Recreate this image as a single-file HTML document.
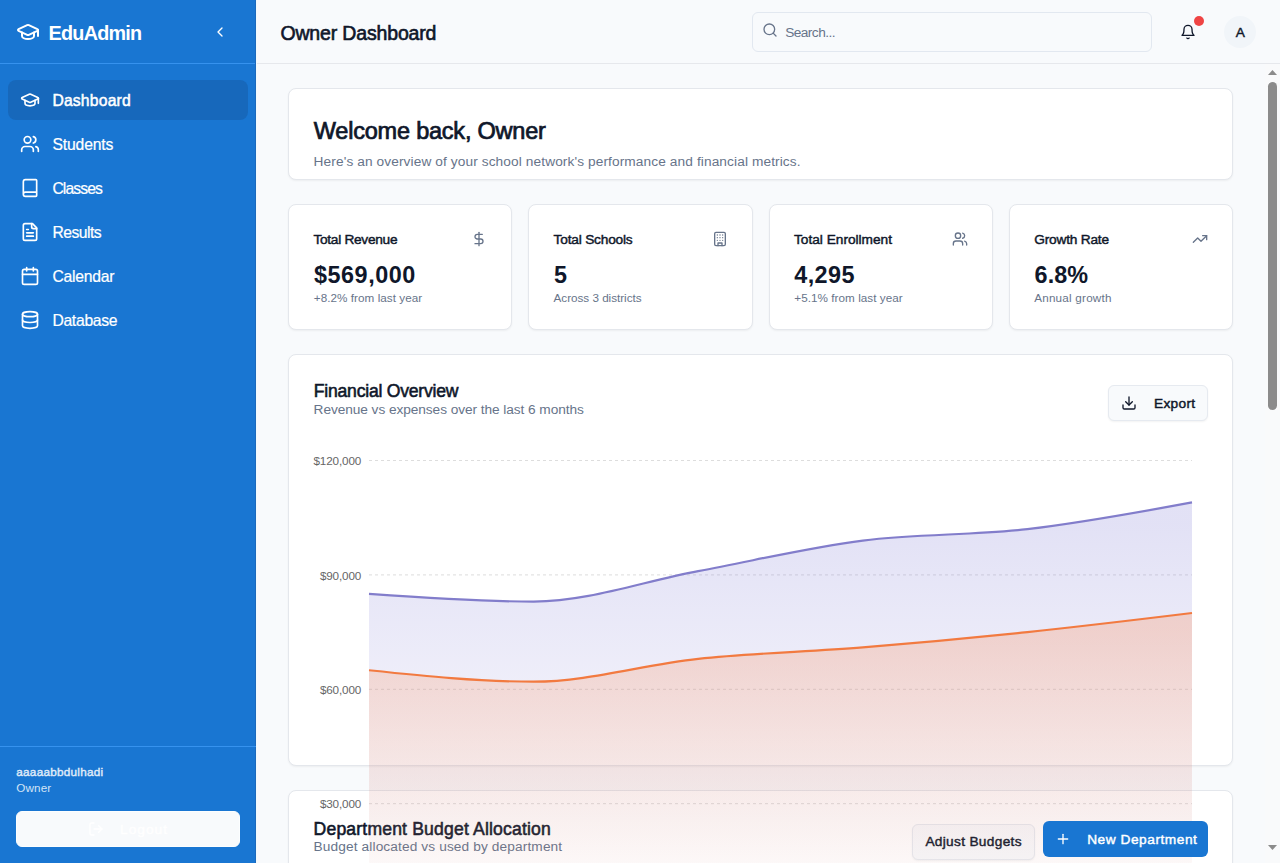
<!DOCTYPE html>
<html lang="en">
<head>
<meta charset="utf-8">
<title>Owner Dashboard</title>
<style>
*{box-sizing:border-box;margin:0;padding:0}
html,body{width:1280px;height:863px;overflow:hidden;background:#f8fafc;font-family:"Liberation Sans",sans-serif;color:#0f172a}
body{position:relative}
svg{display:block}
.ic{fill:none;stroke:currentColor;stroke-linecap:round;stroke-linejoin:round}
.abs{position:absolute}
.t{position:absolute;white-space:nowrap;line-height:1}
#side{position:absolute;left:0;top:0;width:256px;height:863px;background:#1976d2;color:#fff}
.hr{position:absolute;left:0;width:256px;height:1px;background:#3692ee}
.card{position:absolute;background:#fff;border:1px solid #e4e7ec;border-radius:8px;box-shadow:0 1px 2px rgba(0,0,0,.05)}
.btn{position:absolute;border:1px solid #e6eaf0;border-radius:6px;background:#f8fafc;box-shadow:0 1px 2px rgba(0,0,0,.05)}
</style>
</head>
<body>
<!-- header bar -->
<div class="abs" style="left:256px;top:63px;width:1024px;height:1px;background:#e6e8ec"></div>
<div class="abs" style="left:752px;top:12px;width:400px;height:40px;border:1px solid #e2e8f0;border-radius:6px;background:#f8fafc"></div>
<svg class="ic abs" style="left:762px;top:22px;width:16px;height:16px;color:#67748a" stroke-width="2" viewBox="0 0 24 24"><circle cx="11" cy="11" r="8"/><path d="m21 21-4.300-4.300"/></svg><div class="t" id="h1" style="left:280.40px;top:24.00px;font-size:19.50px;color:#0f172a;-webkit-text-stroke:0.62px #0f172a;letter-spacing:-0.155px;">Owner Dashboard</div>
<div class="t" id="srch" style="left:785.20px;top:26.00px;font-size:13.70px;color:#67748a;letter-spacing:-0.562px;">Search...</div><svg class="ic abs" style="left:1180px;top:24px;width:16px;height:16px;color:#0f172a" stroke-width="2" viewBox="0 0 24 24"><path d="M6 8a6 6 0 0 1 12 0c0 7 3 9 3 9H3s3-2 3-9"/><path d="M10.300 21a1.940 1.940 0 0 0 3.400 0"/></svg>
<div class="abs" style="left:1194px;top:16px;width:10px;height:10px;border-radius:50%;background:#ef4444"></div>
<div class="abs" style="left:1224px;top:16px;width:32px;height:32px;border-radius:50%;background:#f1f5f9"></div>
<div class="t" id="av" style="left:1235.80px;top:26.00px;font-size:13.70px;color:#0f172a;-webkit-text-stroke:0.43px #0f172a;">A</div>
<!-- cards -->
<div class="card" style="left:288px;top:88px;width:945px;height:92px"></div>
<div class="t" id="w1" style="left:313.80px;top:120.00px;font-size:23.50px;color:#0f172a;-webkit-text-stroke:0.74px #0f172a;letter-spacing:-0.214px;">Welcome back, Owner</div>
<div class="t" id="w2" style="left:313.60px;top:155.00px;font-size:13.70px;color:#67748a;letter-spacing:0.101px;">Here&#39;s an overview of your school network&#39;s performance and financial metrics.</div>
<div class="card" style="left:288px;top:204px;width:224.25px;height:126px"></div>
<div class="card" style="left:528.25px;top:204px;width:224.25px;height:126px"></div>
<div class="card" style="left:768.5px;top:204px;width:224.25px;height:126px"></div>
<div class="card" style="left:1008.75px;top:204px;width:224.25px;height:126px"></div>
<div class="t" id="s1" style="left:313.40px;top:233.00px;font-size:13.70px;color:#0f172a;-webkit-text-stroke:0.45px #0f172a;letter-spacing:-0.281px;">Total Revenue</div>
<div class="t" id="s2" style="left:553.60px;top:233.00px;font-size:13.70px;color:#0f172a;-webkit-text-stroke:0.45px #0f172a;letter-spacing:-0.194px;">Total Schools</div>
<div class="t" id="s3" style="left:794.00px;top:233.00px;font-size:13.70px;color:#0f172a;-webkit-text-stroke:0.45px #0f172a;letter-spacing:-0.009px;">Total Enrollment</div>
<div class="t" id="s4" style="left:1034.30px;top:233.00px;font-size:13.70px;color:#0f172a;-webkit-text-stroke:0.45px #0f172a;letter-spacing:-0.214px;">Growth Rate</div>
<div class="t" id="v1" style="left:314.00px;top:264.00px;font-size:23.40px;color:#0f172a;font-weight:bold;letter-spacing:0.525px;">$569,000</div>
<div class="t" id="v2" style="left:554.00px;top:264.00px;font-size:23.40px;color:#0f172a;font-weight:bold;">5</div>
<div class="t" id="v3" style="left:794.30px;top:264.00px;font-size:23.40px;color:#0f172a;font-weight:bold;letter-spacing:0.390px;">4,295</div>
<div class="t" id="v4" style="left:1034.60px;top:264.00px;font-size:23.40px;color:#0f172a;font-weight:bold;letter-spacing:0.078px;">6.8%</div>
<div class="t" id="b1" style="left:313.80px;top:292.00px;font-size:11.70px;color:#67748a;letter-spacing:0.045px;">+8.2% from last year</div>
<div class="t" id="b2" style="left:553.60px;top:292.00px;font-size:11.70px;color:#67748a;letter-spacing:-0.019px;">Across 3 districts</div>
<div class="t" id="b3" style="left:794.30px;top:292.00px;font-size:11.70px;color:#67748a;letter-spacing:0.045px;">+5.1% from last year</div>
<div class="t" id="b4" style="left:1034.20px;top:292.00px;font-size:11.70px;color:#67748a;letter-spacing:0.213px;">Annual growth</div><svg class="ic abs" style="left:471px;top:231px;width:16px;height:16px;color:#67748a" stroke-width="2" viewBox="0 0 24 24"><line x1="12" x2="12" y1="2" y2="22"/><path d="M17 5H9.500a3.500 3.500 0 0 0 0 7h5a3.500 3.500 0 0 1 0 7H6"/></svg><svg class="ic abs" style="left:711.5px;top:231px;width:16px;height:16px;color:#67748a" stroke-width="2" viewBox="0 0 24 24"><rect width="16" height="20" x="4" y="2" rx="2" ry="2"/><path d="M9 22v-4h6v4"/><path d="M8 6h.01"/><path d="M16 6h.01"/><path d="M12 6h.01"/><path d="M12 10h.01"/><path d="M12 14h.01"/><path d="M16 10h.01"/><path d="M16 14h.01"/><path d="M8 10h.01"/><path d="M8 14h.01"/></svg><svg class="ic abs" style="left:951.5px;top:231px;width:16px;height:16px;color:#67748a" stroke-width="2" viewBox="0 0 24 24"><path d="M16 21v-2a4 4 0 0 0-4-4H6a4 4 0 0 0-4 4v2"/><circle cx="9" cy="7" r="4"/><path d="M22 21v-2a4 4 0 0 0-3-3.870"/><path d="M16 3.130a4 4 0 0 1 0 7.750"/></svg><svg class="ic abs" style="left:1192px;top:231px;width:16px;height:16px;color:#67748a" stroke-width="2" viewBox="0 0 24 24"><polyline points="22 7 13.5 15.5 8.500 10.500 2 17"/><polyline points="16 7 22 7 22 13"/></svg>
<div class="card" style="left:288px;top:354px;width:945px;height:412px"></div>
<div class="card" style="left:288px;top:790px;width:945px;height:200px"></div>
<div class="btn" style="left:1108px;top:385px;width:100px;height:36px"></div>
<svg class="ic abs" style="left:1121px;top:395px;width:16px;height:16px;color:#0f172a" stroke-width="2" viewBox="0 0 24 24"><path d="M21 15v4a2 2 0 0 1-2 2H5a2 2 0 0 1-2-2v-4"/><polyline points="7 10 12 15 17 10"/><line x1="12" x2="12" y1="15" y2="3"/></svg>
<div class="btn" style="left:912px;top:824px;width:123px;height:36px"></div>
<div class="t" id="f1" style="left:313.80px;top:383.00px;font-size:17.60px;color:#0f172a;-webkit-text-stroke:0.56px #0f172a;letter-spacing:-0.230px;">Financial Overview</div>
<div class="t" id="f2" style="left:313.60px;top:403.00px;font-size:13.70px;color:#67748a;letter-spacing:-0.071px;">Revenue vs expenses over the last 6 months</div>
<div class="t" id="exp" style="left:1154.00px;top:397.00px;font-size:13.70px;color:#0f172a;-webkit-text-stroke:0.45px #0f172a;letter-spacing:0.316px;">Export</div>
<div class="t" id="d1" style="left:313.60px;top:821.00px;font-size:17.60px;color:#0f172a;-webkit-text-stroke:0.56px #0f172a;letter-spacing:0.164px;">Department Budget Allocation</div>
<div class="t" id="d2" style="left:313.60px;top:840.00px;font-size:13.70px;color:#67748a;letter-spacing:0.116px;">Budget allocated vs used by department</div>
<div class="t" id="adj" style="left:925.40px;top:835.00px;font-size:13.70px;color:#0f172a;-webkit-text-stroke:0.45px #0f172a;letter-spacing:0.313px;">Adjust Budgets</div>
<div class="t" id="y1" style="left:313.40px;top:455.00px;font-size:11.70px;color:#666;letter-spacing:-0.127px;">$120,000</div>
<div class="t" id="y2" style="left:319.90px;top:570.00px;font-size:11.70px;color:#666;letter-spacing:-0.146px;">$90,000</div>
<div class="t" id="y3" style="left:319.90px;top:684.00px;font-size:11.70px;color:#666;letter-spacing:-0.146px;">$60,000</div>
<div class="t" id="y4" style="left:319.90px;top:798.00px;font-size:11.70px;color:#666;letter-spacing:-0.146px;">$30,000</div>
<svg class="abs" style="left:0;top:0;width:1280px;height:863px" viewBox="0 0 1280 863">
<defs>
<linearGradient id="gR" gradientUnits="userSpaceOnUse" x1="0" y1="503" x2="0" y2="918.1"><stop offset="5%" stop-color="#8884d8" stop-opacity="0.8"/><stop offset="95%" stop-color="#8884d8" stop-opacity="0"/></linearGradient>
<linearGradient id="gE" gradientUnits="userSpaceOnUse" x1="0" y1="613" x2="0" y2="918.1"><stop offset="5%" stop-color="#ff8042" stop-opacity="0.8"/><stop offset="95%" stop-color="#ff8042" stop-opacity="0"/></linearGradient>
</defs>
<g stroke="#ccc" stroke-dasharray="3 3" stroke-width="1" opacity="0.65"><line x1="369" x2="1192" y1="460.5" y2="460.5"/><line x1="369" x2="1192" y1="574.9" y2="574.9"/><line x1="369" x2="1192" y1="689.3" y2="689.3"/><line x1="369" x2="1192" y1="803.7" y2="803.7"/></g>
<path d="M369.00,593.97C423.87,597.78,478.73,601.59,533.60,601.59C588.47,601.59,643.33,581.26,698.20,571.09C753.07,560.92,807.93,547.57,862.80,540.58C917.67,533.59,972.53,535.50,1027.40,529.14C1082.27,522.78,1137.13,512.62,1192.00,502.45L1192,918.1L369,918.1Z" fill="url(#gR)" fill-opacity="0.3"/>
<path d="M369.00,593.97C423.87,597.78,478.73,601.59,533.60,601.59C588.47,601.59,643.33,581.26,698.20,571.09C753.07,560.92,807.93,547.57,862.80,540.58C917.67,533.59,972.53,535.50,1027.40,529.14C1082.27,522.78,1137.13,512.62,1192.00,502.45" fill="none" stroke="#827dcb" stroke-width="2.2"/>
<path d="M369.00,670.23C423.87,675.95,478.73,681.67,533.60,681.67C588.47,681.67,643.33,664.51,698.20,658.79C753.07,653.07,807.93,651.80,862.80,647.35C917.67,642.90,972.53,637.82,1027.40,632.10C1082.27,626.38,1137.13,619.71,1192.00,613.03L1192,918.1L369,918.1Z" fill="url(#gE)" fill-opacity="0.3"/>
<path d="M369.00,670.23C423.87,675.95,478.73,681.67,533.60,681.67C588.47,681.67,643.33,664.51,698.20,658.79C753.07,653.07,807.93,651.80,862.80,647.35C917.67,642.90,972.53,637.82,1027.40,632.10C1082.27,626.38,1137.13,619.71,1192.00,613.03" fill="none" stroke="#f27a40" stroke-width="2.2"/>
</svg>
<div class="abs" style="left:1043px;top:821px;width:165px;height:36px;border-radius:6px;background:#1976d2"></div>
<svg class="ic abs" style="left:1055px;top:831px;width:16px;height:16px;color:#fff" stroke-width="2" viewBox="0 0 24 24"><path d="M5 12h14"/><path d="M12 5v14"/></svg><div class="t" id="newd" style="left:1087.20px;top:833.00px;font-size:13.70px;color:#fff;-webkit-text-stroke:0.43px #fff;letter-spacing:0.541px;">New Department</div>
<!-- scrollbar -->
<div class="abs" style="left:1265px;top:64px;width:15px;height:799px;background:#f9fafb"></div>
<div class="abs" style="left:1268px;top:82px;width:9px;height:328px;border-radius:5px;background:#8b8b8b"></div>
<svg class="abs" style="left:1265px;top:64px;width:15px;height:16px" viewBox="0 0 15 16"><path d="M3 11L7.500 6L12 11Z" fill="#8b8b8b"/></svg>
<svg class="abs" style="left:1265px;top:840px;width:15px;height:16px" viewBox="0 0 15 16"><path d="M3 5L7.500 10L12 5Z" fill="#8b8b8b"/></svg>
<!-- sidebar -->
<div class="abs" style="left:256px;top:0;width:1px;height:863px;background:#f1fbff"></div>
<div id="side">
<svg class="ic abs" style="left:16px;top:20px;width:24px;height:24px" stroke-width="2" viewBox="0 0 24 24"><path d="M21.42 10.922a1 1 0 0 0-.019-1.838L12.83 5.18a2 2 0 0 0-1.66 0L2.6 9.08a1 1 0 0 0 0 1.832l8.57 3.908a2 2 0 0 0 1.66 0z"/><path d="M22 10v6"/><path d="M6 12.500V16a6 3 0 0 0 12 0v-3.500"/></svg><svg class="ic abs" style="left:212px;top:24px;width:16px;height:16px" stroke-width="2" viewBox="0 0 24 24"><path d="m15 18-6-6 6-6"/></svg>
<div class="hr" style="top:63px"></div>
<div class="abs" style="left:255px;top:0;width:1px;height:863px;background:#1c69bc"></div>
<div class="abs" style="left:8px;top:80px;width:240px;height:40px;border-radius:8px;background:#1768bb"></div>
<svg class="ic abs" style="left:20px;top:90px;width:20px;height:20px" stroke-width="2" viewBox="0 0 24 24"><path d="M21.42 10.922a1 1 0 0 0-.019-1.838L12.83 5.18a2 2 0 0 0-1.66 0L2.6 9.08a1 1 0 0 0 0 1.832l8.57 3.908a2 2 0 0 0 1.66 0z"/><path d="M22 10v6"/><path d="M6 12.500V16a6 3 0 0 0 12 0v-3.500"/></svg><svg class="ic abs" style="left:20px;top:134px;width:20px;height:20px" stroke-width="2" viewBox="0 0 24 24"><path d="M16 21v-2a4 4 0 0 0-4-4H6a4 4 0 0 0-4 4v2"/><circle cx="9" cy="7" r="4"/><path d="M22 21v-2a4 4 0 0 0-3-3.870"/><path d="M16 3.130a4 4 0 0 1 0 7.750"/></svg><svg class="ic abs" style="left:20px;top:178px;width:20px;height:20px" stroke-width="2" viewBox="0 0 24 24"><path d="M4 19.500v-15A2.500 2.500 0 0 1 6.500 2H19a1 1 0 0 1 1 1v18a1 1 0 0 1-1 1H6.500a1 1 0 0 1 0-5H20"/></svg><svg class="ic abs" style="left:20px;top:222px;width:20px;height:20px" stroke-width="2" viewBox="0 0 24 24"><path d="M15 2H6a2 2 0 0 0-2 2v16a2 2 0 0 0 2 2h12a2 2 0 0 0 2-2V7Z"/><path d="M14 2v4a2 2 0 0 0 2 2h4"/><path d="M10 9H8"/><path d="M16 13H8"/><path d="M16 17H8"/></svg><svg class="ic abs" style="left:20px;top:266px;width:20px;height:20px" stroke-width="2" viewBox="0 0 24 24"><path d="M8 2v4"/><path d="M16 2v4"/><rect width="18" height="18" x="3" y="4" rx="2"/><path d="M3 10h18"/></svg><svg class="ic abs" style="left:20px;top:310px;width:20px;height:20px" stroke-width="2" viewBox="0 0 24 24"><ellipse cx="12" cy="5" rx="9" ry="3"/><path d="M3 5V19A9 3 0 0 0 21 19V5"/><path d="M3 12A9 3 0 0 0 21 12"/></svg><div class="t" id="logo" style="left:48.60px;top:24.00px;font-size:19.80px;color:#fff;font-weight:bold;letter-spacing:-0.761px;">EduAdmin</div>
<div class="t" id="n1" style="left:52.40px;top:93.00px;font-size:15.70px;color:#fff;-webkit-text-stroke:0.50px #fff;letter-spacing:0.194px;">Dashboard</div>
<div class="t" id="n2" style="left:52.40px;top:137.00px;font-size:15.70px;color:#fff;-webkit-text-stroke:0.22px #fff;letter-spacing:-0.125px;">Students</div>
<div class="t" id="n3" style="left:52.40px;top:181.00px;font-size:15.70px;color:#fff;-webkit-text-stroke:0.22px #fff;letter-spacing:-0.892px;">Classes</div>
<div class="t" id="n4" style="left:52.40px;top:225.00px;font-size:15.70px;color:#fff;-webkit-text-stroke:0.22px #fff;letter-spacing:-0.510px;">Results</div>
<div class="t" id="n5" style="left:52.40px;top:269.00px;font-size:15.70px;color:#fff;-webkit-text-stroke:0.22px #fff;letter-spacing:-0.223px;">Calendar</div>
<div class="t" id="n6" style="left:52.40px;top:313.00px;font-size:15.70px;color:#fff;-webkit-text-stroke:0.22px #fff;letter-spacing:-0.287px;">Database</div>
<div class="hr" style="top:746px"></div>
<div class="t" id="u1" style="left:16.30px;top:766.00px;font-size:11.70px;color:#e1edf9;-webkit-text-stroke:0.37px #e1edf9;letter-spacing:0.281px;">aaaaabbdulhadi</div>
<div class="t" id="u2" style="left:16.30px;top:782.00px;font-size:11.70px;color:#d3e4f6;letter-spacing:0.125px;">Owner</div>
<div class="abs" style="left:16px;top:811px;width:224px;height:36px;border-radius:6px;background:#f8fafc;border:1px solid #fcfeff"></div>
<svg class="ic abs" style="left:88px;top:821px;width:16px;height:16px;color:#fff" stroke-width="2" viewBox="0 0 24 24"><path d="M9 21H5a2 2 0 0 1-2-2V5a2 2 0 0 1 2-2h4"/><polyline points="16 17 21 12 16 7"/><line x1="21" x2="9" y1="12" y2="12"/></svg><div class="t" id="lo" style="left:120.00px;top:823.00px;font-size:13.70px;color:#fff;-webkit-text-stroke:0.45px #fff;letter-spacing:1.023px;">Logout</div>
</div>
</body>
</html>
